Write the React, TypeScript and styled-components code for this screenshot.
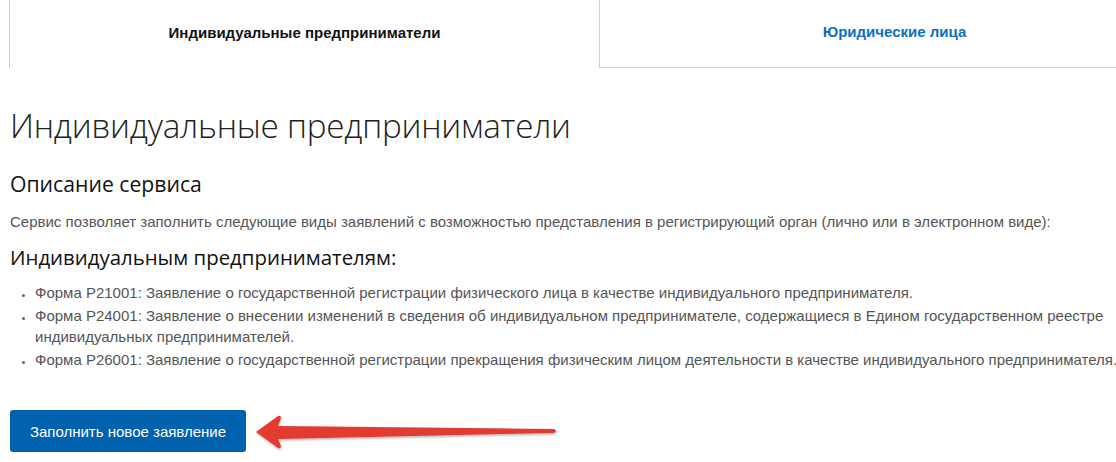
import React from "react";
import styled, { createGlobalStyle } from "styled-components";

const Global = createGlobalStyle`
  html, body { margin: 0; padding: 0; background: #fff; overflow: hidden; }
  body { font-family: Arial, "Liberation Sans", sans-serif; }
`;

const Page = styled.div`
  width: 1116px;
  height: 462px;
  overflow: hidden;
  position: relative;
`;

const Tabs = styled.div`
  display: flex;
  margin-left: 9px;
  width: 1180px;
  height: 68px;
`;

const Tab = styled.div<{ $active?: boolean }>`
  flex: 0 0 590px;
  box-sizing: border-box;
  display: flex;
  align-items: center;
  justify-content: center;
  padding-bottom: 4px;
  border-left: 1px solid #cfcfcf;
  border-bottom: ${(p) => (p.$active ? "none" : "1px solid #cfcfcf")};
  font-family: "Liberation Sans", Arial, sans-serif;
  font-weight: bold;
  font-size: 15px;
  color: ${(p) => (p.$active ? "#111" : "#0a6fc2")};
`;

const Content = styled.div`
  width: 1130px;
  padding: 0 0 0 10px;
`;

const Title = styled.h1`
  margin: 36px 0 0;
  font-family: "Open Sans", sans-serif;
  font-weight: 300;
  font-size: 33.2px;
  line-height: 44px;
  color: #222;
  letter-spacing: -0.2px;
`;

const SubTitle = styled.h2<{ $top: number; $size: number }>`
  margin: ${(p) => p.$top}px 0 0;
  font-family: "Open Sans", sans-serif;
  font-weight: 400;
  font-size: ${(p) => p.$size}px;
  line-height: 28px;
  color: #111;
`;

const Text = styled.p`
  margin: 14px 0 0;
  font-family: "Liberation Sans", Arial, sans-serif;
  font-size: 15px;
  line-height: 20px;
  color: #555;
`;

const List = styled.ul`
  margin: 11px 0 0;
  padding: 0 0 0 25px;
  font-family: "Liberation Sans", Arial, sans-serif;
  font-size: 15px;
  line-height: 21px;
  color: #555;
  li { margin-bottom: 2px; }
  li::marker { font-size: 11px; color: #666; }
`;

const ActionRow = styled.div`
  display: flex;
  align-items: center;
  margin-top: 40px;
`;

const Button = styled.button`
  width: 236px;
  height: 42px;
  border: none;
  border-radius: 3px;
  background: #0061ae;
  color: #fff;
  font-family: "Liberation Sans", Arial, sans-serif;
  font-size: 15px;
  cursor: pointer;
`;

const ArrowSvg = styled.svg`
  margin-left: 8px;
  margin-top: 2px;
`;

export default function App() {
  return (
    <Page>
      <Global />
      <Tabs>
        <Tab $active>Индивидуальные предприниматели</Tab>
        <Tab>Юридические лица</Tab>
      </Tabs>
      <Content>
        <Title>Индивидуальные предприниматели</Title>
        <SubTitle $top={22} $size={21.2}>Описание сервиса</SubTitle>
        <Text>
          Сервис позволяет заполнить следующие виды заявлений с возможностью представления в регистрирующий орган (лично или в электронном виде):
        </Text>
        <SubTitle $top={11} $size={20.4}>Индивидуальным предпринимателям:</SubTitle>
        <List>
          <li>Форма Р21001: Заявление о государственной регистрации физического лица в качестве индивидуального предпринимателя.</li>
          <li>Форма Р24001: Заявление о внесении изменений в сведения об индивидуальном предпринимателе, содержащиеся в Едином государственном реестре индивидуальных предпринимателей.</li>
          <li>Форма Р26001: Заявление о государственной регистрации прекращения физическим лицом деятельности в качестве индивидуального предпринимателя.</li>
        </List>
        <ActionRow>
          <Button>Заполнить новое заявление</Button>
          <ArrowSvg width="316" height="40" viewBox="0 0 316 40">
            <defs>
              <filter id="sh" x="-5%" y="-30%" width="110%" height="160%">
                <feDropShadow dx="0.5" dy="1.5" stdDeviation="1" floodColor="#000" floodOpacity="0.3" />
              </filter>
            </defs>
            <path
              d="M2 20 L24 4 Q27 3 27 6 L24 14 L300 17 Q304 19 300 21 L24 27 L27 34 Q27 37 24 36 Z"
              fill="#e33b30"
              filter="url(#sh)"
            />
          </ArrowSvg>
        </ActionRow>
      </Content>
    </Page>
  );
}
